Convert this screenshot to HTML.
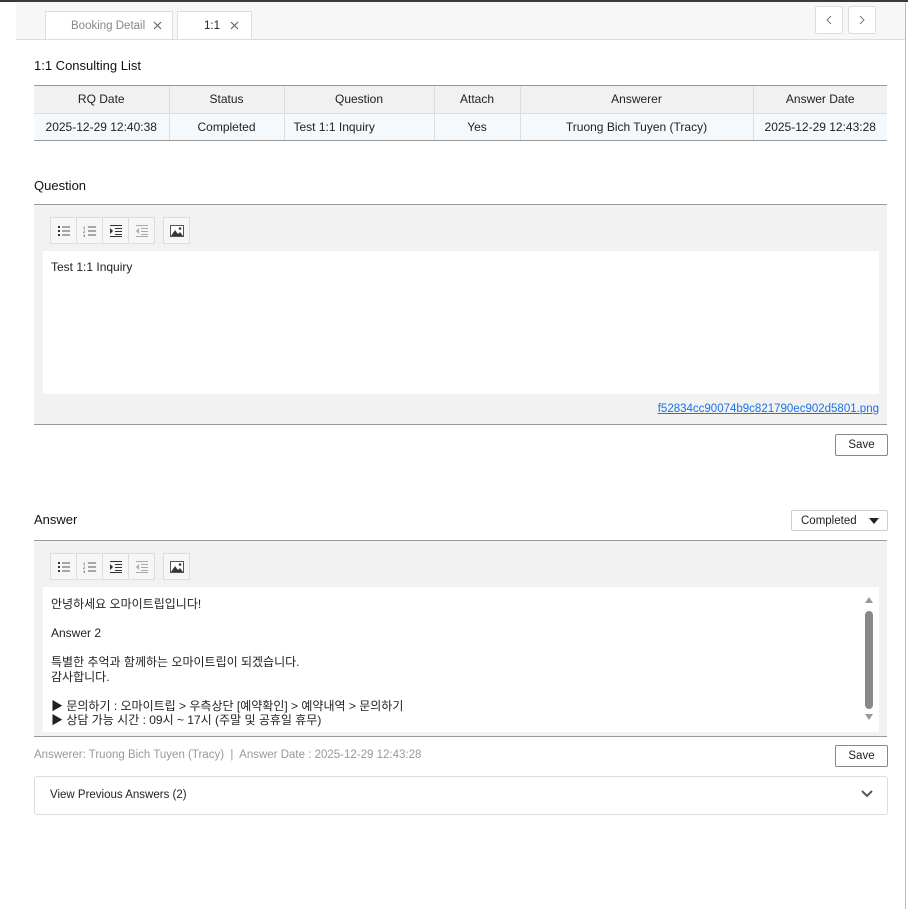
<!DOCTYPE html>
<html><head><meta charset="utf-8">
<style>
*{box-sizing:border-box;margin:0;padding:0}
body{width:908px;height:909px;background:#fff;font-family:"Liberation Sans","Noto Sans CJK KR",sans-serif;font-size:12px;color:#222;position:relative;overflow:hidden}
.a{position:absolute}
.topbar{left:0;top:0;width:908px;height:2px;background:#3a3a3a}
.tabbar{left:16px;top:2px;width:889px;height:38px;background:#f7f7f8;border-bottom:1px solid #ddd}
.tab{top:11px;height:28px;background:#fff;border:1px solid #ddd;border-bottom:none;display:flex;align-items:center;font-size:11.5px}
.nav{top:6px;width:28px;height:28px;border:1px solid #ddd;background:#fff;border-radius:2px;display:flex;align-items:center;justify-content:center}
.rline{left:905px;top:2px;width:1px;height:907px;background:#bbb}
.h{font-size:13px;color:#111}
table{border-collapse:collapse;width:853px;table-layout:fixed}
td,th{height:27px;text-align:center;font-size:12px;border-right:1px solid #ddd;font-weight:normal;color:#222}
td:last-child,th:last-child{border-right:none}
th{background:#f1f1f1;border-bottom:1px solid #ddd}
td{background:#f4f9fd}
.ed{left:34px;width:853px;background:#f2f2f2;border-top:1px solid #999;border-bottom:1px solid #999}
.tb{position:absolute;top:12px;height:27px;display:flex;left:16px}
.b{width:27px;height:27px;border:1px solid #ddd;background:#f6f6f6;display:flex;align-items:center;justify-content:center;margin-right:-1px}
.content{position:absolute;left:9px;right:8px;background:#fff;padding:9px 8px;font-size:12px;line-height:15px}
.btn{width:53px;height:22px;border:1px solid #888;border-radius:2px;background:#fff;font-size:11.5px;display:flex;align-items:center;justify-content:center}
</style></head><body>
<div class="a topbar"></div>
<div class="a tabbar"></div>
<div class="a rline"></div>
<div class="a tab" style="left:45px;width:128px;padding-left:25px;color:#888">Booking Detail<svg style="margin-left:8px" width="9" height="9" viewBox="0 0 9 9"><path d="M1 1L8 8M8 1L1 8" stroke="#666" stroke-width="1.2"/></svg></div>
<div class="a tab" style="left:177px;width:75px;padding-left:26px;color:#222">1:1<svg style="margin-left:10px" width="9" height="9" viewBox="0 0 9 9"><path d="M1 1L8 8M8 1L1 8" stroke="#666" stroke-width="1.2"/></svg></div>
<div class="a nav" style="left:815px"><svg width="6" height="10"><path d="M5 1L1 5L5 9" stroke="#777" fill="none"/></svg></div>
<div class="a nav" style="left:848px"><svg width="6" height="10"><path d="M1 1L5 5L1 9" stroke="#777" fill="none"/></svg></div>

<div class="a h" style="left:34px;top:58px">1:1 Consulting List</div>
<div class="a" style="left:34px;top:85px;border-top:1px solid #999;border-bottom:1px solid #999">
<table><colgroup><col style="width:135px"><col style="width:115px"><col style="width:150px"><col style="width:86px"><col style="width:233px"><col style="width:134px"></colgroup>
<tr><th>RQ Date</th><th>Status</th><th>Question</th><th>Attach</th><th>Answerer</th><th>Answer Date</th></tr>
<tr><td>2025-12-29 12:40:38</td><td>Completed</td><td style="text-align:left;padding-left:9px">Test 1:1 Inquiry</td><td>Yes</td><td>Truong Bich Tuyen (Tracy)</td><td>2025-12-29 12:43:28</td></tr>
</table></div>

<div class="a h" style="left:34px;top:178px">Question</div>
<div class="a ed" style="top:204px;height:221px">
 <div class="tb" id="t1"></div>
 <div class="content" style="top:46px;height:143px">Test 1:1 Inquiry</div>
 <div class="a" style="right:8px;top:198px;color:#1a73e8;text-decoration:underline;font-size:11.5px">f52834cc90074b9c821790ec902d5801.png</div>
</div>
<div class="a btn" style="left:835px;top:434px">Save</div>

<div class="a h" style="left:34px;top:512px">Answer</div>
<div class="a" style="left:791px;top:510px;width:97px;height:21px;border:1px solid #ccc;border-radius:2px;background:#fff;font-size:11.5px;padding:4px 0 0 9px">Completed<svg style="position:absolute;right:8px;top:7px" width="10" height="6"><path d="M0 0H10L5 6Z" fill="#222"/></svg></div>
<div class="a ed" style="top:540px;height:197px">
 <div class="tb" id="t2"></div>
 <div class="content" style="top:46px;height:145px;padding-top:10px;line-height:14.5px">
 안녕하세요 오마이트립입니다!<br><br>Answer 2<br><br>특별한 추억과 함께하는 오마이트립이 되겠습니다.<br>감사합니다.<br><br>▶ 문의하기 : 오마이트립 &gt; 우측상단 [예약확인] &gt; 예약내역 &gt; 문의하기<br>▶ 상담 가능 시간 : 09시 ~ 17시 (주말 및 공휴일 휴무)
 <div class="a" style="right:6px;top:10px;width:0;height:0;border-left:4px solid transparent;border-right:4px solid transparent;border-bottom:6px solid #999"></div>
 <div class="a" style="right:6px;top:24px;width:8px;height:98px;border-radius:4px;background:#888"></div>
 <div class="a" style="right:6px;top:127px;width:0;height:0;border-left:4px solid transparent;border-right:4px solid transparent;border-top:6px solid #999"></div>
 </div>
</div>
<div class="a" style="left:34px;top:749px;color:#999;font-size:11.5px">Answerer: Truong Bich Tuyen (Tracy) &nbsp;|&nbsp; Answer Date : 2025-12-29 12:43:28</div>
<div class="a btn" style="left:835px;top:745px">Save</div>
<div class="a" style="left:34px;top:776px;width:854px;height:39px;border:1px solid #ddd;border-radius:3px;padding:12px 0 0 15px;font-size:11.5px">View Previous Answers (2)
<svg style="position:absolute;right:14px;top:13px" width="12" height="8"><path d="M1 1L6 6L11 1" stroke="#556" stroke-width="2" fill="none"/></svg></div>

<script>
var icons=[
'<svg width="14" height="12"><rect x="1" y="1" width="2" height="2" fill="#333"/><rect x="1" y="5" width="2" height="2" fill="#333"/><rect x="1" y="9" width="2" height="2" fill="#333"/><path d="M5 2H13M5 6H13M5 10H13" stroke="#555"/></svg>',
'<svg width="14" height="12"><text x="0" y="4" font-size="4" fill="#333">1</text><text x="0" y="8" font-size="4" fill="#333">2</text><text x="0" y="12" font-size="4" fill="#333">3</text><path d="M5 2H13M5 6H13M5 10H13" stroke="#555"/></svg>',
'<svg width="14" height="12"><path d="M1 0.5H13M6 3.5H13M6 6.5H13M6 9.5H13M1 11.5H13" stroke="#333"/><path d="M1 3L4 6L1 9Z" fill="#333"/></svg>',
'<svg width="14" height="12"><path d="M1 0.5H13M6 3.5H13M6 6.5H13M6 9.5H13M1 11.5H13" stroke="#aaa"/><path d="M4 3L1 6L4 9Z" fill="#aaa"/></svg>',
'<svg width="14" height="12"><rect x="0.5" y="0.5" width="13" height="11" fill="#fff" stroke="#555"/><path d="M1 11L5 5L8 9L10 7L13 11Z" fill="#334"/><circle cx="10" cy="3.5" r="1.3" fill="#334"/></svg>'];
['t1','t2'].forEach(function(id){var h='';for(var i=0;i<4;i++)h+='<div class="b">'+icons[i]+'</div>';h+='<div class="b" style="margin-left:9px">'+icons[4]+'</div>';document.getElementById(id).innerHTML=h;});
</script>
</body></html>
